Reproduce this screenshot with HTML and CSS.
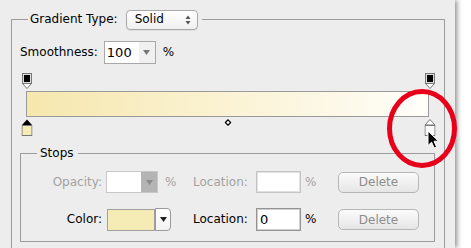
FILE: index.html
```html
<!DOCTYPE html>
<html lang="en">
<head>
    <meta charset="UTF-8">
    <meta name="viewport" content="width=device-width, initial-scale=1.0">
    <title>Gradient Editor</title>
    <link rel="stylesheet" href="styles.css">
</head>
<body>
    <div class="panel">
        <fieldset class="group">
            <legend class="group-title">
                <div class="legend-inner">
                    <span>Gradient Type:</span>
                    <span class="select">Solid
                        <svg class="select-arrows" width="6" height="10" viewBox="0 0 6 10"><path d="M0.5 4L3 0.5L5.5 4Z M0.5 6L3 9.5L5.5 6Z" fill="#555"/></svg>
                    </span>
                </div>
            </legend>

            <div class="smooth-row">
                <span>Smoothness:</span>
                <span class="combo">
                    <span class="combo-value">100</span>
                    <span class="combo-btn"><svg width="7" height="5" viewBox="0 0 7 5"><path d="M0 0H7L3.5 5Z" fill="#777"/></svg></span>
                </span>
                <span>%</span>
            </div>

            <div class="editor">
                <div class="stop-row top">
                    <span class="stop" style="left: 0%">
                        <svg width="10" height="16" viewBox="0 0 10 16"><rect x="0.5" y="0.5" width="9" height="10" fill="#ddd" stroke="#777"/><rect x="2" y="2" width="6" height="7" fill="#000"/><path d="M0.5 10.5H9.5L5 15.5Z" fill="#fff" stroke="#777"/></svg>
                    </span>
                    <span class="stop" style="left: 100%">
                        <svg width="10" height="16" viewBox="0 0 10 16"><rect x="0.5" y="0.5" width="9" height="10" fill="#ddd" stroke="#777"/><rect x="2" y="2" width="6" height="7" fill="#000"/><path d="M0.5 10.5H9.5L5 15.5Z" fill="#fff" stroke="#777"/></svg>
                    </span>
                </div>
                <div class="bar"></div>
                <div class="stop-row bottom">
                    <span class="stop" style="left: 0%">
                        <svg width="11" height="17" viewBox="0 0 11 17"><path d="M5.5 0.5L10.5 6H0.5Z" fill="#000"/><rect x="0.5" y="6.5" width="10" height="10" fill="#f5ecb5" stroke="#777"/></svg>
                    </span>
                    <span class="midpoint" style="left: 50%">
                        <svg width="7" height="7" viewBox="0 0 7 7"><path d="M3.5 0.8L6.2 3.5L3.5 6.2L0.8 3.5Z" fill="#fff" stroke="#000" stroke-width="1.2"/></svg>
                    </span>
                    <span class="stop" style="left: 100%">
                        <svg width="11" height="17" viewBox="0 0 11 17"><path d="M5.5 0.5L10.5 6H0.5Z" fill="#fff" stroke="#777"/><rect x="0.5" y="6.5" width="10" height="10" fill="#fafafa" stroke="#777"/></svg>
                    </span>
                    <svg class="cursor" width="12" height="19" viewBox="0 0 12 19"><path d="M1 1V15.5L4.6 12.2L7.2 18L9.6 17L7 11.2H11.5Z" fill="#000" stroke="#fff" stroke-width="1"/></svg>
                </div>
            </div>

            <fieldset class="stops">
                <legend class="stops-title">Stops</legend>
                <div class="stop-grid">
                    <span class="label disabled">Opacity:</span>
                    <span class="cell">
                        <span class="combo off">
                            <span class="combo-value"></span>
                            <span class="combo-btn"><svg width="7" height="5" viewBox="0 0 7 5"><path d="M0 0H7L3.5 5Z" fill="#8a8a8a"/></svg></span>
                        </span>
                        <span class="disabled">%</span>
                    </span>
                    <span class="disabled">Location:</span>
                    <span class="cell">
                        <span class="field off"></span>
                        <span class="disabled">%</span>
                    </span>
                    <button class="delete">Delete</button>

                    <span class="label">Color:</span>
                    <span class="cell">
                        <span class="swatch"></span>
                        <span class="swatch-btn"><svg width="7" height="5" viewBox="0 0 7 5"><path d="M0 0H7L3.5 5Z" fill="#222"/></svg></span>
                    </span>
                    <span>Location:</span>
                    <span class="cell">
                        <span class="field">0</span>
                        <span>%</span>
                    </span>
                    <button class="delete">Delete</button>
                </div>
            </fieldset>
        </fieldset>
    </div>

    <svg class="callout" width="471" height="248" viewBox="0 0 471 248">
        <ellipse cx="422" cy="128.5" rx="32.5" ry="37" fill="none" stroke="#e8001a" stroke-width="5"/>
    </svg>
</body>
</html>
```

FILE: styles.css
```css
body {
    margin: 0;
    background: #fff;
    font-family: 'DejaVu Sans', sans-serif;
    font-size: 12px;
    line-height: 15px;
    color: #000;
    position: relative;
    width: 471px;
    height: 248px;
    overflow: hidden;
}
.panel {
    width: 455px;
    height: 248px;
    padding-top: 9px;
    box-sizing: border-box;
    background: #ededed;
    box-shadow: 2px 0 5px rgba(0, 0, 0, 0.45);
    overflow: hidden;
}
.group {
    margin: 0 0 0 11px;
    width: 434px;
    box-sizing: border-box;
    padding: 11px 8px 30px 8px;
    border: 1px solid #9c9c9c;
    border-bottom: none;
}
.group-title {
    margin-left: 8px;
    padding: 0 4px 0 2px;
}
.legend-inner {
    display: flex;
    align-items: center;
    gap: 8px;
    height: 21px;
}
.select {
    display: flex;
    align-items: center;
    justify-content: space-between;
    width: 72px;
    height: 20px;
    box-sizing: border-box;
    padding: 0 6px 0 8px;
    border: 1px solid #a8a8a8;
    border-radius: 4px;
    background: linear-gradient(#ffffff, #f0f0f0);
    box-shadow: 0 1px 0 rgba(0, 0, 0, 0.06);
}
.smooth-row {
    display: flex;
    align-items: center;
    height: 23px;
    gap: 6px;
}
.smooth-row .combo {
    margin-right: 1px;
}
.combo {
    display: flex;
    width: 52px;
    height: 23px;
    box-sizing: border-box;
    border: 1px solid #a9a9a9;
    background: #fff;
}
.combo-value {
    flex: 1;
    padding-left: 2px;
    line-height: 21px;
    font-size: 13px;
}
.combo-btn {
    width: 16px;
    display: flex;
    align-items: center;
    justify-content: center;
    background: #f0f0f0;
}
.combo.off {
    height: 22px;
    border-color: #c8c8c8;
}
.combo.off .combo-btn {
    background: #b4b4b4;
}
.editor {
    margin: 9px 0 0 6px;
    width: 403px;
}
.stop-row {
    position: relative;
}
.stop-row.top {
    height: 18px;
}
.stop-row.bottom {
    height: 20px;
}
.stop {
    position: absolute;
    display: block;
    transform: translateX(-50%);
    line-height: 0;
}
.stop-row.top .stop {
    top: 0;
    margin-left: 1px;
}
.stop-row.bottom .stop {
    top: 2px;
    margin-left: 1px;
}
.midpoint {
    position: absolute;
    top: 2px;
    transform: translateX(-50%);
    line-height: 0;
}
.cursor {
    position: absolute;
    left: calc(100% - 2px);
    top: 13px;
}
.bar {
    height: 26px;
    box-sizing: border-box;
    border: 1px solid #9a9a9a;
    background: linear-gradient(to right, #f6e7ad, #fffefa);
}
.stops {
    margin: 9px 0 0 0;
    width: 415px;
    box-sizing: border-box;
    padding: 10px 0 10px 0;
    border: 1px solid #9c9c9c;
}
.stops-title {
    margin-left: 16px;
    padding: 0 4px 0 3px;
}
.stop-grid {
    display: grid;
    grid-template-columns: 85px 87px 63px 82px 81px;
    grid-template-rows: 22px 23px;
    row-gap: 15px;
    align-items: center;
}
.label {
    text-align: right;
    padding-right: 4px;
}
.disabled {
    color: #a3a3a3;
}
.cell {
    display: flex;
    align-items: center;
    gap: 7px;
    height: 100%;
}
.field {
    width: 45px;
    height: 23px;
    box-sizing: border-box;
    border: 1px solid #949494;
    box-shadow: inset 0 0 0 1px #cfcfcf;
    background: #fff;
    padding-left: 3px;
    line-height: 21px;
    font-size: 13px;
}
.field.off {
    height: 22px;
    border-color: #c4c4c4;
    box-shadow: inset 0 0 0 1px #e2e2e2;
}
.cell .field + span {
    margin-left: -3px;
}
.swatch {
    width: 48px;
    height: 22px;
    box-sizing: border-box;
    margin-left: 1px;
    border: 1px solid #a0a0a0;
    background: #f5ecb5;
}
.swatch-btn {
    margin-left: -7px;
    width: 16px;
    height: 23px;
    box-sizing: border-box;
    border: 1px solid #9a9a9a;
    border-radius: 0 4px 4px 0;
    background: linear-gradient(#fff, #f2f2f2);
    display: flex;
    align-items: center;
    justify-content: center;
}
.delete {
    width: 81px;
    height: 21px;
    padding: 0;
    font-family: 'DejaVu Sans', sans-serif;
    font-size: 12px;
    color: #8c8c8c;
    border: 1px solid #b6b6b6;
    border-radius: 5px;
    background: linear-gradient(#fbfbfb, #e6e6e6);
}
.callout {
    position: absolute;
    left: 0;
    top: 0;
    pointer-events: none;
}
```
